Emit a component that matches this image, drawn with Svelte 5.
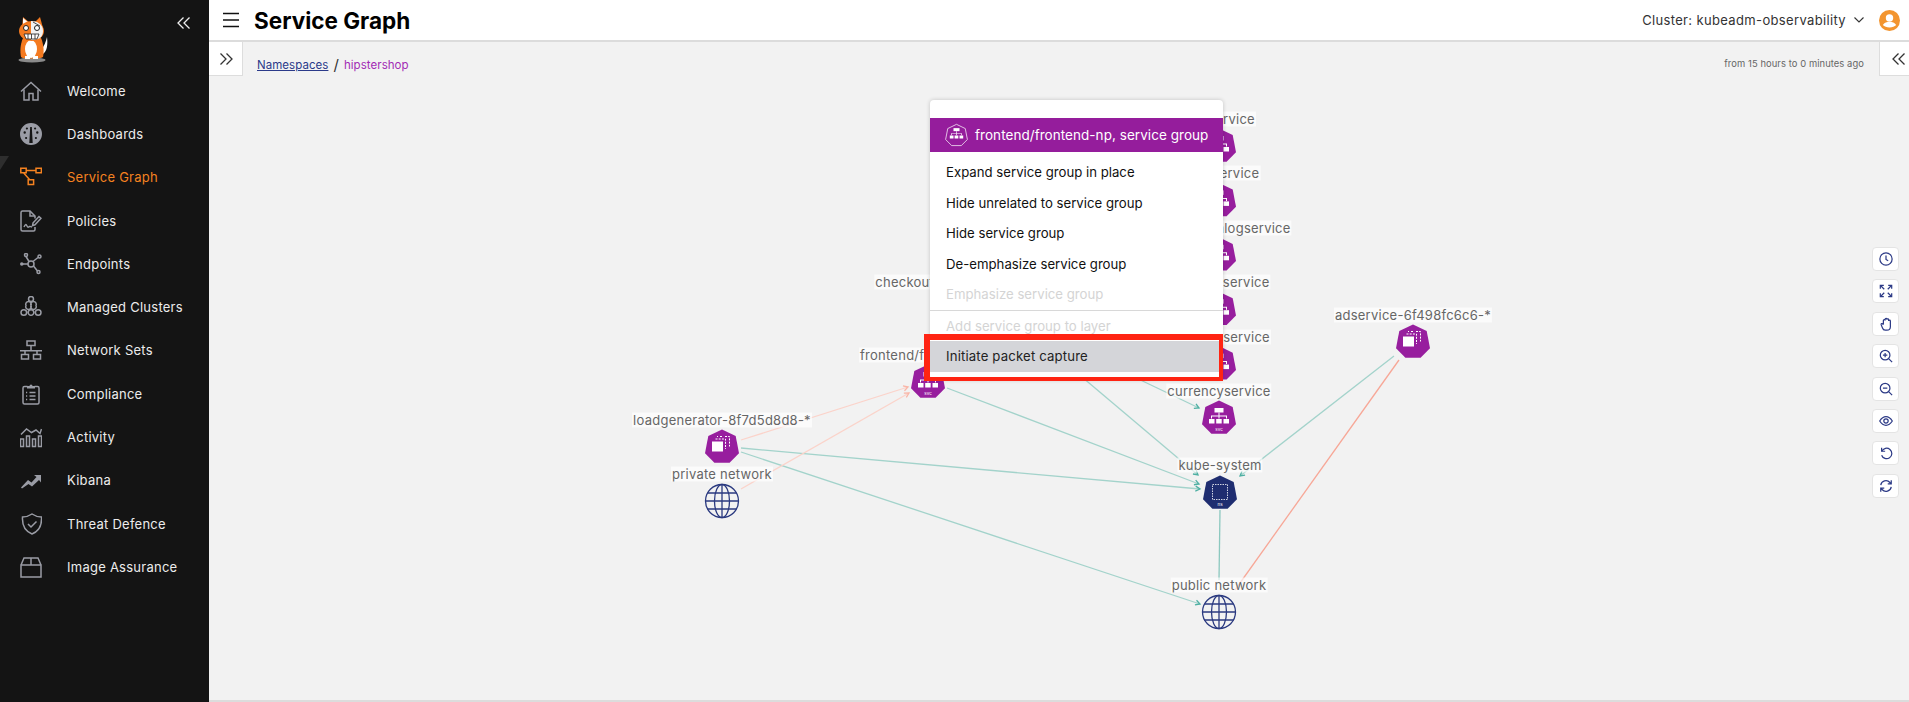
<script lang="ts">
	const navItems = [
		{ label: 'Welcome', paths: ['M1 11.5 11 2.5l10 9', 'M4 9.5V20h5v-6.5h4V20h5V9.5'] },
		{
			label: 'Dashboards',
			fill: 'M0 11a11 11 0 1 0 22 0a11 11 0 1 0-22 0zM9.3 20 10.2 4h1.6l.9 16zM3.5 9.5a1.2 1.2 0 1 0 2.4 0a1.2 1.2 0 1 0-2.4 0zM16.1 9.5a1.2 1.2 0 1 0 2.4 0a1.2 1.2 0 1 0-2.4 0zM5 15a1.1 1.1 0 1 0 2.2 0a1.1 1.1 0 1 0-2.2 0zM14.8 15a1.1 1.1 0 1 0 2.2 0a1.1 1.1 0 1 0-2.2 0zM5.8 5.5a1.1 1.1 0 1 0 2.2 0a1.1 1.1 0 1 0-2.2 0zM14 5.5a1.1 1.1 0 1 0 2.2 0a1.1 1.1 0 1 0-2.2 0z'
		},
		{
			label: 'Service Graph',
			active: true,
			paths: ['M.8 2.2h5.4v4.6H.8zM16 2.2h5.4v4.6H16zM8.2 13.8h5.4v4.8H8.2zM6.2 4.5H16M3.5 6.8l6.2 7']
		},
		{
			label: 'Policies',
			paths: [
				'M15 8.5V6l-5-5H2.5A1.5 1.5 0 0 0 1 2.5v17A1.5 1.5 0 0 0 2.5 21h11a1.5 1.5 0 0 0 1.5-1.5V17',
				'M10 1v5h5',
				'M4 17c1.5-3 2-3 3-1s1.500 1 2.500.5 1.500.5 2.500.5',
				'm13 13 6-6.500 2 1.800-6 6.500-2.500.8z'
			]
		},
		{
			label: 'Endpoints',
			paths: [
				'M8 11a3 3 0 1 0 6 0a3 3 0 1 0-6 0z',
				'M8 11H3M9 8.500 6 3.500M13 8.500l5-4M13.500 13l4 5',
				'M4.500 2a1.500 1.500 0 1 0 3 0a1.500 1.500 0 1 0-3 0zM18 3.500a1.500 1.500 0 1 0 3 0a1.500 1.500 0 1 0-3 0zM17 19a1.500 1.500 0 1 0 3 0a1.500 1.500 0 1 0-3 0z'
			],
			fill: 'M0 11a1.800 1.800 0 1 0 3.600 0a1.800 1.800 0 1 0-3.600 0z'
		},
		{
			label: 'Managed Clusters',
			paths: [
				'M8.500 3a2.500 2.500 0 1 0 5 0a2.500 2.500 0 1 0-5 0z',
				'M6 9.500a2.800 2.800 0 1 0 5 0a2.800 2.800 0 1 0-5 0zM11 9.500a2.800 2.800 0 1 0 5 0a2.800 2.800 0 1 0-5 0z',
				'M1 16.500a2.800 2.800 0 1 0 5.600 0a2.800 2.800 0 1 0-5.600 0zM8.200 16.500a2.800 2.800 0 1 0 5.600 0a2.800 2.800 0 1 0-5.600 0zM15.400 16.500a2.800 2.800 0 1 0 5.600 0a2.800 2.800 0 1 0-5.600 0z'
			]
		},
		{
			label: 'Network Sets',
			paths: ['M7 2h8v4.500H7zM1.500 15.500h7V20h-7zM13.500 15.500h7V20h-7zM11 6.500V11M0 11.800h22M5 12v3.500M17 12v3.500']
		},
		{
			label: 'Compliance',
			paths: [
				'M7.500 3.500H4.500A1.500 1.500 0 0 0 3 5v14.500A1.500 1.500 0 0 0 4.500 21h13a1.500 1.500 0 0 0 1.500-1.500V5a1.500 1.500 0 0 0-1.500-1.500h-3',
				'M9.500 9.500h6M9.500 13h6M9.500 16.500h6M6 9.500h1.200M6 13h1.200M6 16.500h1.200'
			],
			fill: 'M7 5.500V3h2.500a1.500 1.500 0 0 1 3 0H15v2.500z'
		},
		{
			label: 'Activity',
			paths: [
				'M.500 13h3v7.500h-3zM6.500 10h3v10.500h-3zM12.500 13h3v7.500h-3zM18.500 10h3v10.500h-3z',
				'M1 8.500 6.500 3l5 3.500L16 4l4 3.500L21.500 3'
			]
		},
		{ label: 'Kibana', fill: 'M1 18.500 8 11l3.500 2.500L16.500 8 14 6h7v7.500L19 11l-7 6.500-3.500-2.500-6.500 4.500z' },
		{
			label: 'Threat Defence',
			paths: ['M12 1c3 2 6 3 9.500 3 .5 8-2 14-9.500 17-7.500-3-10-9-9.500-17C6 4 9 3 12 1z', 'M8 11l3 3 5.500-5.500']
		},
		{
			label: 'Image Assurance',
			paths: ['M1 9h20v12H1zM1 9l3-7h14l3 7M11 2v7']
		}
	];

	const services = ['cartservice', 'emailservice', 'productcatalogservice', 'shippingservice', 'paymentservice', 'currencyservice'].map(
		(name, i) => ({ name, y: 146 + i * 54.4 })
	);

	const labels = [
		...services.map((s) => ({ text: s.name, x: 1219, y: s.y - 27 })),
		{ text: 'checkoutservice', x: 928, y: 282 },
		{ text: 'frontend/frontend-np', x: 928, y: 355 },
		{ text: 'loadgenerator-8f7d5d8d8-*', x: 722, y: 420 },
		{ text: 'private network', x: 722, y: 474 },
		{ text: 'adservice-6f498fc6c6-*', x: 1413, y: 315 },
		{ text: 'kube-system', x: 1220, y: 465 },
		{ text: 'public network', x: 1219, y: 585 }
	];

	const tealEdges = [
		[947, 388, 1199, 484],
		[741, 448, 1200, 489],
		[741, 452, 1200, 604],
		[1050, 350, 1198, 475],
		[1130, 375, 1199, 408],
		[1394, 356, 1240, 476]
	];
	const pinkEdges = [
		[741, 440, 908, 387],
		[741, 489, 909, 393]
	];

	const heptagon = '0,-17.500 13.700,-10.900 17,6.300 7.600,15.800 -7.600,15.800 -17,6.300 -13.700,-10.900';

	const menuItems = [
		{ label: 'Expand service group in place' },
		{ label: 'Hide unrelated to service group' },
		{ label: 'Hide service group' },
		{ label: 'De-emphasize service group' },
		{ label: 'Emphasize service group', disabled: true },
		{ label: 'Add service group to layer', disabled: true, divider: true },
		{ label: 'Initiate packet capture', selected: true }
	];

	const tools = [
		['M8 1a7 7 0 1 0 0 14a7 7 0 0 0 0-14z', 'M8 4v4.500l2.500 1.500'],
		['M2 2l4 4M14 2l-4 4M2 14l4-4M14 14l-4-4', 'M1.500 5.500v-4h4M10.500 1.500h4v4M1.500 10.500v4h4M10.500 14.500h4v-4'],
		['M5 8V4a1 1 0 0 1 2 0V2.500a1 1 0 0 1 2 0V3a1 1 0 0 1 2 0v1.500a1 1 0 0 1 2 0V11c0 2.500-1.500 4-4 4H7c-1.500 0-2.500-1-3-2.500L2.500 9c-.5-1.500 1-2 2-1L5 9'],
		['M7 1.500a5.500 5.500 0 1 0 0 11a5.500 5.500 0 0 0 0-11zM11 11l4 4M7 4.500v5M4.500 7h5'],
		['M7 1.500a5.500 5.500 0 1 0 0 11a5.500 5.500 0 0 0 0-11zM11 11l4 4M4.500 7h5'],
		['M.8 8C3 4.500 5.500 3 8 3s5 1.500 7.200 5C13 11.500 10.500 13 8 13S3 11.500.8 8z', 'M8 5.500a2.500 2.500 0 1 0 0 5a2.500 2.500 0 0 0 0-5z'],
		['M3 2v4h4', 'M3.200 6A6 6 0 1 1 3 10.500'],
		['M2 7a6 6 0 0 1 10.500-3L14 5.500M14 1.500v4h-4', 'M14 9a6 6 0 0 1-10.500 3L2 10.500M2 14.500v-4h4']
	];
</script>

{#snippet doubleChevron(flip)}
	<svg class="chev" class:flip width="14" height="14" viewBox="0 0 14 14" fill="none" stroke="currentColor" stroke-width="1.300">
		<path d="M6.500 1.500 1 7l5.500 5.500M12.500 1.500 7 7l5.500 5.500" />
	</svg>
{/snippet}

<div class="app">
	<aside class="sidebar">
		<div class="brand">
			<svg width="64" height="64" viewBox="0 0 64 64">
				<ellipse cx="32" cy="57" rx="13.500" ry="2.500" fill="#8a8a8a" />
				<path d="M43 51c4-3 5-9 4-17-1 5-3 9-6 13z" fill="#fff" />
				<path d="M23 35c-3 7-3 14-2 19 1 2 20 2 22 0 1-5 1-12-2-19z" fill="#f47a20" />
				<ellipse cx="31" cy="46" rx="6" ry="9" fill="#fff" />
				<path d="M25 53h5v3h-5zM33 53h5v3h-5z" fill="#fff" />
				<path d="M22 25l1-11 7 6h4l6-6 3 11z" fill="#f47a20" />
				<path d="M23 15l6 5-6 3z" fill="#fff" />
				<ellipse cx="31.500" cy="28" rx="12.500" ry="10" fill="#f47a20" />
				<path d="M31 18c6 0 12 3 12 10s-5 9-12 9z" fill="#f2f2f2" />
				<circle cx="26" cy="25" r="2.500" fill="#fff" stroke="#222" />
				<circle cx="37" cy="25" r="2.500" fill="#fff" stroke="#222" />
				<path d="M24 31h15l-2 5h-11z" fill="#fff" stroke="#222" stroke-width=".8" />
				<path d="M28 31v5M31.500 31v5M35 31v5M33 19l7 4" stroke="#222" stroke-width=".8" />
			</svg>
			<button class="collapse">{@render doubleChevron(false)}</button>
		</div>
		<nav>
			{#each navItems as item}
				<div class="nav-item" class:active={item.active}>
					{#if item.active}<span class="marker"></span>{/if}
					<svg width="22" height="22" viewBox="0 0 22 22" fill="none" stroke="currentColor" stroke-width="1.500">
						{#if item.fill}<path d={item.fill} fill="currentColor" fill-rule="evenodd" stroke="none" />{/if}
						{#each item.paths ?? [] as d}<path {d} />{/each}
					</svg>
					<span>{item.label}</span>
				</div>
			{/each}
		</nav>
	</aside>

	<div class="main">
		<header>
			<svg class="burger" width="16" height="16" viewBox="0 0 16 16" stroke="#111" stroke-width="1.400">
				<path d="M0 1.500h16M0 8h16M0 14.500h16" />
			</svg>
			<h1>Service Graph</h1>
			<span class="cluster">Cluster: kubeadm-observability</span>
			<svg width="10" height="6" viewBox="0 0 10 6" fill="none" stroke="#333" stroke-width="1.100"><path d="M.5.5 5 5 9.500.5" /></svg>
			<svg class="avatar" width="21" height="21" viewBox="0 0 21 21">
				<circle cx="10.500" cy="10.500" r="10.500" fill="#f3952f" />
				<circle cx="10.500" cy="8" r="3.700" fill="#fff" />
				<path d="M3.800 15c1.500-2.500 4-3 6.700-3s5.200.5 6.700 3c-1.500 1.500-4 2.500-6.700 2.500S5.300 16.500 3.800 15z" fill="#fff" />
			</svg>
		</header>

		<section class="content">
			<div class="topbar">
				<button class="panel-toggle">{@render doubleChevron(true)}</button>
				<div class="crumbs">
					<a href="#ns">Namespaces</a>
					<span class="sep">/</span>
					<span class="current">hipstershop</span>
				</div>
				<span class="range">from 15 hours to 0 minutes ago</span>
				<button class="panel-toggle right">{@render doubleChevron(false)}</button>
			</div>

			<svg class="graph" viewBox="209 42 1700 658" width="1700" height="658">
				<defs>
					<marker id="arrow-teal" markerUnits="userSpaceOnUse" markerWidth="8" markerHeight="8" refX="6" refY="4" orient="auto">
						<path d="M1.500 1.500 6 4 1.500 6.500" fill="none" stroke="#4eb0a3" stroke-width="1.300" />
					</marker>
					<marker id="arrow-pink" markerUnits="userSpaceOnUse" markerWidth="8" markerHeight="8" refX="6" refY="4" orient="auto">
						<path d="M1.500 1.500 6 4 1.500 6.500" fill="none" stroke="#f9b5a7" stroke-width="1.300" />
					</marker>
					<g id="svc-icon" fill="#fff">
						<rect x="-4.500" y="-10" width="9" height="4.500" />
						<path d="M-.5-5.500h1v3h7.500v3h-1v-2h-6.500v2h-1v-2h-6.500v2h-1v-3h7.500z" />
						<rect x="-10" y="1" width="5.500" height="4.500" />
						<rect x="-2.800" y="1" width="5.500" height="4.500" />
						<rect x="4.500" y="1" width="5.500" height="4.500" />
					</g>
					<g id="deploy-icon" fill="none" stroke="#fff">
						<path d="M-4-10.500h-1M-2-10.500h3M3-10.500h4.500v10" stroke-dasharray="2 1.200" />
						<path d="M-6.500-8h10v10" stroke-dasharray="2 1.200" />
						<rect x="-10" y="-5.500" width="11" height="10" fill="#fff" stroke="none" />
					</g>
				</defs>

				{#each tealEdges as [x1, y1, x2, y2]}
					<line {x1} {y1} {x2} {y2} stroke="#a3d3cb" stroke-width="1.300" marker-end="url(#arrow-teal)" />
				{/each}
				<line x1="1220" y1="510" x2="1219" y2="580" stroke="#8cc8bf" stroke-width="1.300" />
				{#each pinkEdges as [x1, y1, x2, y2]}
					<line {x1} {y1} {x2} {y2} stroke="#fbd3ca" stroke-width="1.300" marker-end="url(#arrow-pink)" />
				{/each}
				<line x1="1399" y1="360" x2="1235" y2="590" stroke="#f7a797" stroke-width="1.300" />

				{#each services as s}
					<g transform="translate(1219 {s.y})">
						<polygon points={heptagon} fill="#971e9e" />
						<use href="#svc-icon" />
						<text class="kind" y="12.500">svc</text>
					</g>
				{/each}
				<g transform="translate(928 382)">
					<polygon points={heptagon} fill="#971e9e" />
					<use href="#svc-icon" />
					<text class="kind" y="12.500">svc</text>
				</g>
				<g transform="translate(722 447)">
					<polygon points={heptagon} fill="#971e9e" />
					<use href="#deploy-icon" />
				</g>
				<g transform="translate(1413 342)">
					<polygon points={heptagon} fill="#971e9e" />
					<use href="#deploy-icon" />
				</g>
				<g transform="translate(1220 493)">
					<polygon points={heptagon} fill="#1f2d70" />
					<rect x="-7.500" y="-8.500" width="15" height="15" fill="none" stroke="#fff" stroke-width=".8" stroke-dasharray="1.500 1" />
					<text class="kind" y="13">ns</text>
				</g>
				{#each [[722, 501], [1219, 612]] as [cx, cy]}
					<g transform="translate({cx} {cy})" fill="none" stroke="#2b3a80" stroke-width="1.300">
						<circle r="16.500" />
						<ellipse rx="7.500" ry="16.500" />
						<path d="M0-16.500v33M-16.500 0h33M-14.500-8h29M-14.500 8h29" />
					</g>
				{/each}
			</svg>

			{#each labels as l}
				<span class="node-label" style="left:{l.x - 209}px;top:{l.y - 42}px">{l.text}</span>
			{/each}

			<div class="toolbar">
				{#each tools as paths}
					<button class="tool">
						<svg width="14" height="14" viewBox="0 0 16 16" fill="none" stroke="#2c3a86" stroke-width="1.400">
							{#each paths as d}<path {d} />{/each}
						</svg>
					</button>
				{/each}
			</div>

			<div class="menu">
				<div class="menu-title">
					<svg width="25" height="25" viewBox="-14 -14 28 28">
						<polygon points="0,-12.500 9.800,-7.800 12.200,4.500 5.400,11.300 -5.400,11.300 -12.200,4.500 -9.800,-7.800" fill="none" stroke="#fff" stroke-width=".8" />
						<g transform="scale(.75) translate(0 -1)"><use href="#svc-icon" /></g>
					</svg>
					<span>frontend/frontend-np, service group</span>
				</div>
				<ul>
					{#each menuItems as m}
						<li class:disabled={m.disabled} class:divider={m.divider} class:selected={m.selected}>{m.label}</li>
					{/each}
				</ul>
			</div>
			<div class="callout"></div>
		</section>
	</div>
</div>

<style>
	:global(body) {
		margin: 0;
		font-family: Inter, 'Open Sans', sans-serif;
	}
	.app {
		display: flex;
		width: 1909px;
		height: 702px;
		overflow: hidden;
		background: #f2f2f2;
	}
	.sidebar {
		width: 209px;
		flex: none;
		background: #141414;
		color: #f0f0f0;
	}
	.brand {
		display: flex;
		height: 69px;
		justify-content: space-between;
	}
	.brand svg {
		margin-top: 3px;
	}
	.collapse {
		margin: 16px 18px 0 0;
		padding: 0;
		height: 14px;
		border: none;
		background: none;
		color: #eee;
	}
	.collapse :global(svg),
	.panel-toggle :global(svg) {
		margin: 0;
		display: block;
	}
	.panel-toggle :global(svg.flip) {
		transform: scaleX(-1);
	}
	.nav-item {
		position: relative;
		display: flex;
		align-items: center;
		height: 43.300px;
		padding-left: 20px;
		gap: 25px;
		font-size: 13px;
		letter-spacing: 0.25px;
		color: #9a9ca5;
	}
	.nav-item span:last-child {
		color: #ececec;
	}
	.nav-item.active,
	.nav-item.active span:last-child {
		color: #f58220;
	}
	.marker {
		position: absolute;
		left: 0;
		top: 0;
		border-top: 14px solid #2e2e2e;
		border-right: 9px solid transparent;
	}
	.main {
		flex: 1;
		min-width: 0;
		display: flex;
		flex-direction: column;
	}
	header {
		display: flex;
		align-items: center;
		height: 40px;
		flex: none;
		background: #fff;
		border-bottom: 2px solid #dcdcdc;
		padding: 0 9px 0 14px;
		color: #333;
	}
	.burger {
		margin-right: 15px;
	}
	h1 {
		margin: 0 auto 0 0;
		font-size: 22.500px;
		font-weight: 700;
		color: #000;
	}
	.cluster {
		font-size: 13px;
		letter-spacing: 0.35px;
		margin-right: 8px;
	}
	.avatar {
		margin-left: 15px;
	}
	.content {
		position: relative;
		flex: 1;
		border-bottom: 2px solid #dcdcdc;
	}
	.topbar {
		display: flex;
		align-items: flex-start;
		height: 33px;
	}
	.panel-toggle {
		width: 34px;
		height: 34px;
		padding: 0 0 0 10px;
		background: #fff;
		border: none;
		border-right: 1px solid #ddd;
		border-bottom: 1px solid #ddd;
		color: #333;
	}
	.panel-toggle.right {
		width: 30px;
		border-right: none;
		border-left: 1px solid #ddd;
		padding-left: 12px;
	}
	.crumbs {
		display: flex;
		align-items: center;
		gap: 5px;
		margin: 15px 0 0 14px;
		font-size: 11.500px;
		line-height: 16px;
		letter-spacing: 0.05px;
	}
	.crumbs a {
		color: #2b3a8a;
	}
	.sep {
		font-size: 15px;
		color: #333;
	}
	.current {
		color: #a22bb5;
	}
	.range {
		margin: 14px 15px 0 auto;
		font-size: 9.400px;
		line-height: 15px;
		letter-spacing: 0.08px;
		color: #666;
	}
	.graph {
		position: absolute;
		left: 0;
		top: 0;
		pointer-events: none;
	}
	.kind {
		font-size: 4.500px;
		fill: #fff;
		text-anchor: middle;
	}
	.node-label {
		position: absolute;
		transform: translate(-50%, -50%);
		padding: 0 1px;
		font-size: 13px;
		line-height: 15px;
		letter-spacing: 0.25px;
		white-space: nowrap;
		color: #666;
		background: rgba(255, 255, 255, 0.65);
	}
	.toolbar {
		position: absolute;
		left: 1663px;
		top: 205px;
		display: flex;
		flex-direction: column;
		gap: 8.400px;
	}
	.tool {
		display: flex;
		align-items: center;
		justify-content: center;
		width: 27px;
		height: 24px;
		padding: 0;
		background: #fff;
		border: 1px solid #e4e4e4;
		border-radius: 4px;
	}
	.menu {
		position: absolute;
		left: 721px;
		top: 58px;
		width: 293px;
		height: 280px;
		padding-top: 18px;
		box-sizing: border-box;
		background: #fff;
		border-radius: 4px;
		box-shadow: 0 0 4px rgba(0, 0, 0, 0.2);
	}
	.menu-title {
		display: flex;
		align-items: center;
		gap: 6px;
		height: 34px;
		padding-left: 14px;
		background: #951d9c;
		color: #fff;
		font-size: 13.500px;
		letter-spacing: 0.05px;
		white-space: nowrap;
	}
	ul {
		margin: 5px 0 0;
		padding: 0;
		list-style: none;
	}
	li {
		height: 30.500px;
		line-height: 30.500px;
		padding-left: 16px;
		font-size: 13.200px;
		color: #111;
	}
	li.disabled {
		color: #d4d4d4;
	}
	li.divider {
		border-top: 1px solid #d8d8d8;
	}
	li.selected {
		margin: 0 4px 0 0;
		color: #222;
		background: #d4d5d9;
		letter-spacing: 0.15px;
	}
	.callout {
		position: absolute;
		left: 715px;
		top: 292px;
		width: 299px;
		height: 47px;
		box-sizing: border-box;
		border: solid #ff2413;
		border-width: 6px 4px 4px 6px;
	}
</style>
